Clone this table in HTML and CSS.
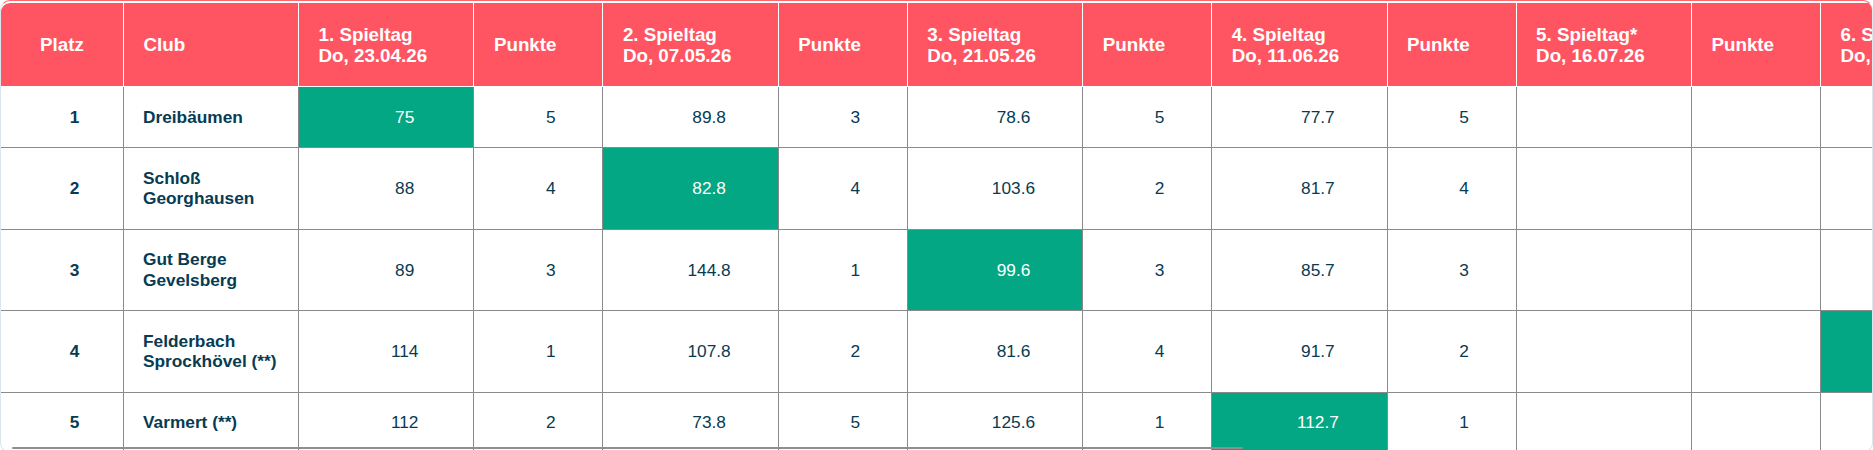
FILE: index.html
```html
<!DOCTYPE html>
<html lang="de">
<head>
<meta charset="utf-8">
<title>Tabelle</title>
<link rel="stylesheet" href="styles.css">
</head>
<body>
<div class="frame">
  <table class="standings">
    <colgroup>
      <col class="c-platz"><col class="c-club">
      <col class="c-day"><col class="c-pts">
      <col class="c-day"><col class="c-pts">
      <col class="c-day"><col class="c-pts">
      <col class="c-day"><col class="c-pts">
      <col class="c-day"><col class="c-pts">
      <col class="c-day"><col class="c-pts">
      <col class="c-day"><col class="c-pts">
      <col class="c-day"><col class="c-pts">
      <col class="c-pts">
    </colgroup>
    <thead>
      <tr>
        <th class="platz">Platz</th>
        <th>Club</th>
        <th>1. Spieltag<br>Do, 23.04.26</th><th>Punkte</th>
        <th>2. Spieltag<br>Do, 07.05.26</th><th>Punkte</th>
        <th>3. Spieltag<br>Do, 21.05.26</th><th>Punkte</th>
        <th>4. Spieltag<br>Do, 11.06.26</th><th>Punkte</th>
        <th>5. Spieltag*<br>Do, 16.07.26</th><th>Punkte</th>
        <th>6. Spieltag<br>Do, 13.08.26</th><th>Punkte</th>
        <th>7. Spieltag<br>Do, 27.08.26</th><th>Punkte</th>
        <th>8. Spieltag<br>Do, 10.09.26</th><th>Punkte</th>
        <th>Gesamt</th>
      </tr>
    </thead>
    <tbody>
      <tr>
        <td class="platz">1</td><td class="club">Dreibäumen</td>
        <td class="score win">75</td><td class="pts">5</td>
        <td class="score">89.8</td><td class="pts">3</td>
        <td class="score">78.6</td><td class="pts">5</td>
        <td class="score">77.7</td><td class="pts">5</td>
        <td class="score"></td><td class="pts"></td>
        <td class="score"></td><td class="pts"></td>
        <td class="score"></td><td class="pts"></td>
        <td class="score"></td><td class="pts"></td>
        <td class="pts">18</td>
      </tr>
      <tr>
        <td class="platz">2</td><td class="club">Schloß Georghausen</td>
        <td class="score">88</td><td class="pts">4</td>
        <td class="score win">82.8</td><td class="pts">4</td>
        <td class="score">103.6</td><td class="pts">2</td>
        <td class="score">81.7</td><td class="pts">4</td>
        <td class="score"></td><td class="pts"></td>
        <td class="score"></td><td class="pts"></td>
        <td class="score"></td><td class="pts"></td>
        <td class="score"></td><td class="pts"></td>
        <td class="pts">14</td>
      </tr>
      <tr>
        <td class="platz">3</td><td class="club">Gut Berge Gevelsberg</td>
        <td class="score">89</td><td class="pts">3</td>
        <td class="score">144.8</td><td class="pts">1</td>
        <td class="score win">99.6</td><td class="pts">3</td>
        <td class="score">85.7</td><td class="pts">3</td>
        <td class="score"></td><td class="pts"></td>
        <td class="score"></td><td class="pts"></td>
        <td class="score"></td><td class="pts"></td>
        <td class="score"></td><td class="pts"></td>
        <td class="pts">10</td>
      </tr>
      <tr>
        <td class="platz">4</td><td class="club">Felderbach Sprockhövel (**)</td>
        <td class="score">114</td><td class="pts">1</td>
        <td class="score">107.8</td><td class="pts">2</td>
        <td class="score">81.6</td><td class="pts">4</td>
        <td class="score">91.7</td><td class="pts">2</td>
        <td class="score"></td><td class="pts"></td>
        <td class="score win"></td><td class="pts"></td>
        <td class="score"></td><td class="pts"></td>
        <td class="score"></td><td class="pts"></td>
        <td class="pts">9</td>
      </tr>
      <tr>
        <td class="platz">5</td><td class="club">Varmert (**)</td>
        <td class="score">112</td><td class="pts">2</td>
        <td class="score">73.8</td><td class="pts">5</td>
        <td class="score">125.6</td><td class="pts">1</td>
        <td class="score win">112.7</td><td class="pts">1</td>
        <td class="score"></td><td class="pts"></td>
        <td class="score"></td><td class="pts"></td>
        <td class="score"></td><td class="pts"></td>
        <td class="score"></td><td class="pts"></td>
        <td class="pts">9</td>
      </tr>
    </tbody>
  </table>
  <div class="thumb"></div>
</div>
</body>
</html>
```

FILE: styles.css
```css
html, body {
  margin: 0;
  padding: 0;
  overflow: hidden;
  background: #ffffff;
}

body {
  font-family: "Liberation Sans", Arial, sans-serif;
}

.frame {
  position: relative;
  box-sizing: border-box;
  height: 453px;
  padding-top: 2px;
  border: 1px solid #ff6670;
  border-left-color: #dce7eb;
  border-right-color: #dce7eb;
  border-radius: 10px;
  overflow: hidden;
}

.standings {
  border-collapse: separate;
  border-spacing: 0;
  table-layout: fixed;
  width: 2862px;
}

.c-platz { width: 123px; }
.c-club { width: 175px; }
.c-day { width: 175.4px; }
.c-pts { width: 129px; }

.standings th {
  background: #ff5562;
  color: #ffffff;
  font-weight: 700;
  font-size: 18.8px;
  line-height: 21px;
  text-align: left;
  vertical-align: middle;
  padding: 20.5px 19.5px;
  border-right: 1px solid #ffffff;
  border-bottom: 1px solid #ffffff;
  white-space: nowrap;
}

.standings th.platz {
  text-align: center;
  padding-left: 0;
  padding-right: 0;
  border-top-left-radius: 9px;
}

.standings td {
  font-size: 17.3px;
  line-height: 20.5px;
  color: #073b52;
  text-align: center;
  vertical-align: middle;
  padding: 19.75px 0;
  border-right: 1px solid #8a8a8a;
  border-bottom: 1px solid #8a8a8a;
}

.standings td.platz {
  font-weight: 700;
  padding-left: 25px;
}

.standings td.club {
  font-weight: 700;
  text-align: left;
  padding-left: 19px;
  padding-right: 19px;
}

.standings td.score {
  padding-left: 37px;
}

.standings td.pts {
  padding-left: 25px;
}

.standings td.win {
  background: #03a783;
  color: #ffffff;
}

.thumb {
  position: absolute;
  left: 11px;
  bottom: 3px;
  width: 1231px;
  height: 2px;
  border-radius: 2px;
  background: #8e8e8e;
}
```
